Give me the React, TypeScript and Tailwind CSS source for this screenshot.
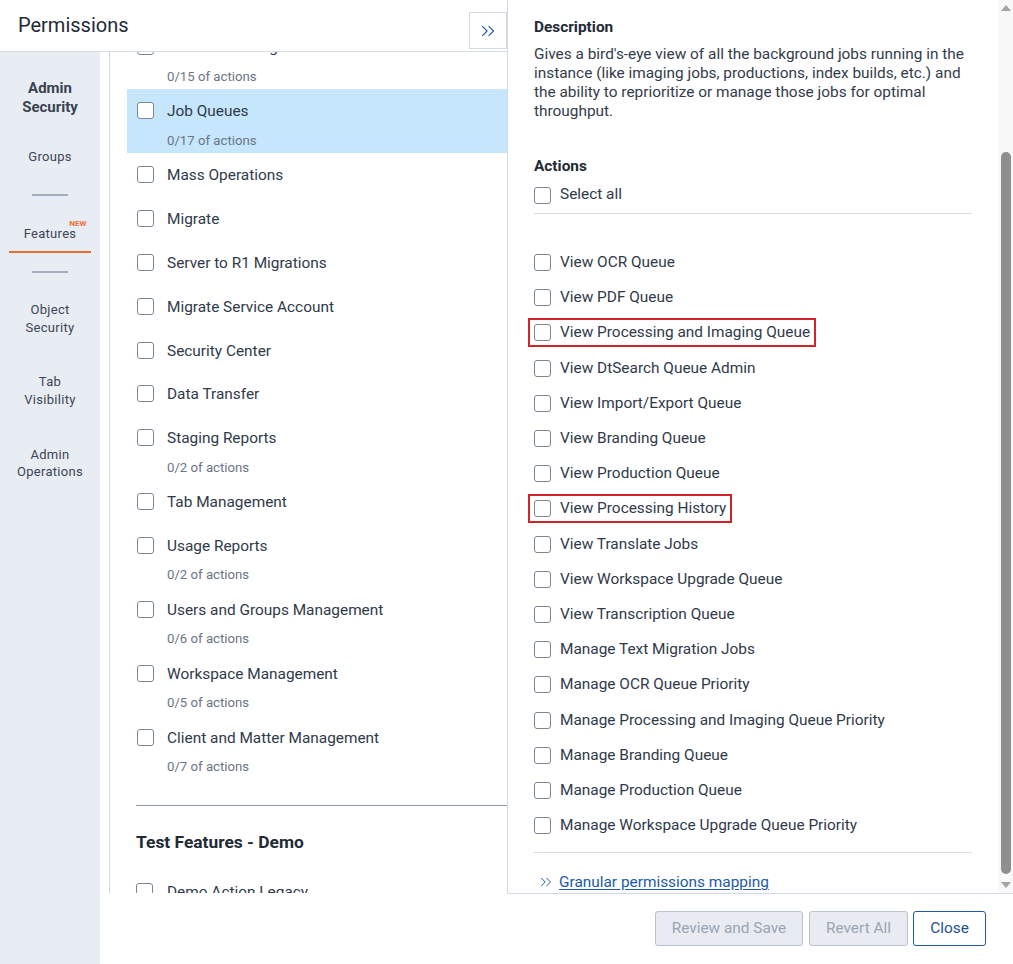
import React from "react";
import { ChevronsRight } from "lucide-react";

const Checkbox = () => (
  <span className="inline-block w-[17px] h-[17px] shrink-0 rounded-[3px] border-[1.5px] border-[#7b8697] bg-white" />
);

type Item = { title: string; sub?: string; active?: boolean };

const leftItems: Item[] = [
  { title: "Instance Settings", sub: "0/15 of actions" },
  { title: "Job Queues", sub: "0/17 of actions", active: true },
  { title: "Mass Operations" },
  { title: "Migrate" },
  { title: "Server to R1 Migrations" },
  { title: "Migrate Service Account" },
  { title: "Security Center" },
  { title: "Data Transfer" },
  { title: "Staging Reports", sub: "0/2 of actions" },
  { title: "Tab Management" },
  { title: "Usage Reports", sub: "0/2 of actions" },
  { title: "Users and Groups Management", sub: "0/6 of actions" },
  { title: "Workspace Management", sub: "0/5 of actions" },
  { title: "Client and Matter Management", sub: "0/7 of actions" },
];

const actions: { t: string; red?: boolean }[] = [
  { t: "View OCR Queue" },
  { t: "View PDF Queue" },
  { t: "View Processing and Imaging Queue", red: true },
  { t: "View DtSearch Queue Admin" },
  { t: "View Import/Export Queue" },
  { t: "View Branding Queue" },
  { t: "View Production Queue" },
  { t: "View Processing History", red: true },
  { t: "View Translate Jobs" },
  { t: "View Workspace Upgrade Queue" },
  { t: "View Transcription Queue" },
  { t: "Manage Text Migration Jobs" },
  { t: "Manage OCR Queue Priority" },
  { t: "Manage Processing and Imaging Queue Priority" },
  { t: "Manage Branding Queue" },
  { t: "Manage Production Queue" },
  { t: "Manage Workspace Upgrade Queue Priority" },
];

export default function App() {
  return (
    <div
      className="flex w-[1013px] h-[964px] bg-white text-[#2f3a4a] overflow-hidden"
      style={{ fontFamily: "Roboto, 'Noto Sans', Arial, sans-serif" }}
    >
      {/* Left column */}
      <div className="w-[507px] shrink-0 flex flex-col">
        <div className="h-[52px] shrink-0 border-b border-[#d6dde7] flex items-center">
          <div className="pl-[18px] text-[20px] text-[#222a35] leading-[24px] -mt-[2px]">Permissions</div>
          <div className="ml-auto mt-[12px] self-start w-[38px] h-[37px] border border-[#d3dae4] flex items-center justify-center text-[#1e5aa8]">
            <ChevronsRight size={22} strokeWidth={1.2} />
          </div>
        </div>
        <div className="flex flex-1 min-h-0">
          {/* Sidebar */}
          <div className="w-[100px] shrink-0 bg-[#e8ecf3] flex flex-col items-center text-center text-[13px] text-[#3c4656] tracking-[0.3px]">
            <div className="mt-[27px] text-[15px] font-bold leading-[19px] text-[#3a4351] tracking-normal">
              Admin
              <br />
              Security
            </div>
            <div className="mt-[31px] leading-[18px]">Groups</div>
            <div className="mt-[28px] w-[36px] h-[2px] bg-[#a3adbb]" />
            <div className="mt-[29px] self-stretch mx-[9px] pb-[8px] border-b-2 border-[#ee6a2f] leading-[18px]">
              <span className="relative inline-block">
                Features
                <span className="absolute left-full -ml-[7px] -top-[5px] text-[8px] font-bold text-[#f0703a] leading-[8px] tracking-normal">
                  NEW
                </span>
              </span>
            </div>
            <div className="mt-[18px] w-[36px] h-[2px] bg-[#a3adbb]" />
            <div className="mt-[28px] leading-[18px]">
              Object
              <br />
              Security
            </div>
            <div className="mt-[36px] leading-[18px]">
              Tab
              <br />
              Visibility
            </div>
            <div className="mt-[37px] leading-[17px]">
              Admin
              <br />
              Operations
            </div>
          </div>
          {/* List area */}
          <div className="flex-1 flex flex-col">
            <div className="h-[841px] ml-[9px] border-l border-[#d0d7e2] overflow-hidden">
              <div className="-mt-[27px] pl-[17px]">
                {leftItems.map((it, i) => (
                  <div key={i} className={it.active ? "bg-[#c6e6fb]" : ""}>
                    <div className="h-[43.8px] flex items-center pl-[10px] gap-[13px] text-[15.4px]">
                      <Checkbox />
                      <span className="pt-[2px]">{it.title}</span>
                    </div>
                    {it.sub && (
                      <div className="h-[20.2px] pl-[40px] text-[13.2px] leading-[16px] text-[#6b7586]">{it.sub}</div>
                    )}
                  </div>
                ))}
                <div className="ml-[9px]">
                  <div className="mt-[26px] h-px bg-[#8d97a6]" />
                  <div className="mt-[24px] text-[17.4px] font-bold leading-[24px] text-[#222a35]">Test Features - Demo</div>
                  <div className="mt-[15px] h-[43.8px] flex items-center gap-[14px] text-[15.4px]">
                    <Checkbox />
                    <span className="pt-[2px]">Demo Action Legacy</span>
                  </div>
                </div>
              </div>
            </div>
            <div className="flex-1" />
          </div>
        </div>
      </div>

      {/* Right column */}
      <div className="flex-1 flex flex-col">
        <div className="h-[894px] shrink-0 border-l border-b border-[#d3dae4] flex">
          <div className="flex-1 pl-[26px] pr-[26px] overflow-hidden">
            <div className="mt-[17px] text-[15.4px] font-bold leading-[20px] text-[#222a35]">Description</div>
            <p className="mt-[8px] text-[15.4px] leading-[19px] text-[#333c4a]">
              Gives a bird's-eye view of all the background jobs running in the instance (like imaging jobs,
              productions, index builds, etc.) and the ability to reprioritize or manage those jobs for optimal
              throughput.
            </p>
            <div className="mt-[35px] text-[15.4px] font-bold leading-[20px] text-[#222a35]">Actions</div>
            <div className="mt-[5px] h-[28px] flex items-center gap-[9px] text-[15.4px]">
              <Checkbox />
              <span>Select all</span>
            </div>
            <div className="mt-[4px] h-px bg-[#d6dde7]" />
            <div className="mt-[31px]">
              {actions.map((a, i) => (
                <div key={i} className="h-[35.2px] flex items-center">
                  <div
                    className={
                      "h-[17px] inline-flex items-center gap-[9px] text-[15.4px] " +
                      (a.red ? "outline-2 outline-offset-4 outline-[#d0262b] outline-solid" : "")
                    }
                  >
                    <Checkbox />
                    <span className="leading-[17px]">{a.t}</span>
                  </div>
                </div>
              ))}
            </div>
            <div className="mt-[9px] h-px bg-[#d6dde7]" />
            <div className="mt-[19px] flex items-center text-[15.4px] leading-[20px] text-[#1e5aa8]">
              <ChevronsRight size={18} strokeWidth={1.3} className="ml-[3px] mr-[4px]" />
              <span className="underline underline-offset-2">Granular permissions mapping</span>
            </div>
          </div>
          {/* Scrollbar */}
          <div className="w-[15px] shrink-0 bg-[#f8f8f8] flex flex-col items-center">
            <div className="mt-[5px] w-0 h-0 border-l-[5px] border-r-[5px] border-b-[6px] border-l-transparent border-r-transparent border-b-[#a3a3a3]" />
            <div className="mt-[141px] w-[10px] h-[722px] rounded-full bg-[#8f8f8f]" />
            <div className="mt-[8px] w-0 h-0 border-l-[5px] border-r-[5px] border-t-[6px] border-l-transparent border-r-transparent border-t-[#a3a3a3]" />
          </div>
        </div>
        <div className="flex justify-end pt-[17px] pr-[27px] text-[15.4px]">
          <div className="w-[148px] h-[35px] flex items-center justify-center rounded-[3px] border border-[#b9c3d0] bg-[#e8ecf2] text-[#9aa5b4]">
            Review and Save
          </div>
          <div className="ml-[6px] w-[99px] h-[35px] flex items-center justify-center rounded-[3px] border border-[#b9c3d0] bg-[#e8ecf2] text-[#9aa5b4]">
            Revert All
          </div>
          <div className="ml-[5px] w-[73px] h-[35px] flex items-center justify-center rounded-[3px] border border-[#1e5aa8] bg-white text-[#1e4f94]">
            Close
          </div>
        </div>
      </div>
    </div>
  );
}
